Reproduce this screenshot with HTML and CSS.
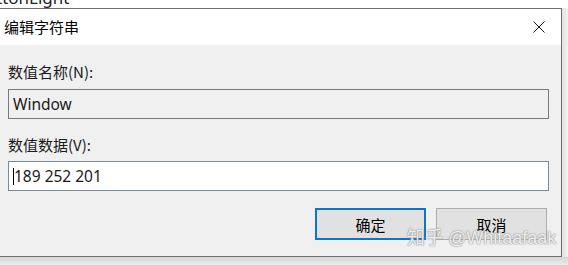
FILE: index.html
```html
<!DOCTYPE html>
<html lang="zh-CN">
<head>
    <meta charset="UTF-8">
    <meta name="viewport" content="width=device-width, initial-scale=1.0">
    <title>编辑字符串</title>
    <link rel="stylesheet" href="styles.css">
</head>
<body>

<div class="behind">
    <span class="behind-text">ttonLight</span>
</div>

<div class="stage">
    <div class="dialog">
        <div class="titlebar">
            <span class="title">编辑字符串</span>
            <button class="close" aria-label="关闭">
                <svg width="12" height="12" viewBox="0 0 12 12">
                    <path d="M0.5 0.5 L11.5 11.5 M11.5 0.5 L0.5 11.5" stroke="#111" stroke-width="1" fill="none"/>
                </svg>
            </button>
        </div>

        <div class="content">
            <label class="field-label">数值名称(N):</label>
            <div class="field readonly">Window</div>

            <label class="field-label second">数值数据(V):</label>
            <div class="field editable"><span class="caret"></span>189 252 201</div>

            <div class="actions">
                <button class="btn primary">确定</button>
                <button class="btn">取消</button>
            </div>

            <div class="watermark">知乎 @Whitaafaak</div>
        </div>
    </div>
    <div class="side-shadow"></div>
</div>

<div class="bottom-shadow"></div>

</body>
</html>
```

FILE: styles.css
```css
body {
    margin: 0;
    padding: 0;
    width: 568px;
    height: 265px;
    overflow: hidden;
    background-color: #fff;
    font-family: "Noto Sans", "Noto Sans CJK SC", sans-serif;
    font-size: 15px;
    color: #000;
}

.behind {
    height: 8px;
    overflow: hidden;
    background: #fff;
}

.behind-text {
    display: block;
    margin-top: -12px;
    margin-left: -4px;
    font-size: 17px;
    line-height: 20px;
    color: #222;
}

.stage {
    display: flex;
}

.dialog {
    position: relative;
    width: 561px;
    border-top: 1px solid #6f6f6f;
    border-right: 1px solid #6f6f6f;
    border-bottom: 1px solid #6f6f6f;
    background-color: #f0f0f0;
}

.side-shadow {
    flex: 1;
    background: linear-gradient(to right, #e2e2e2, #f2f2f2);
}

.bottom-shadow {
    height: 8px;
    background: linear-gradient(to bottom, #d6d6d6, #ececec);
}

.titlebar {
    height: 36px;
    background: #fff;
    display: flex;
    align-items: center;
    justify-content: space-between;
}

.title {
    margin-left: 4px;
    font-family: "Noto Sans CJK SC", sans-serif;
    font-size: 15px;
    line-height: 20px;
}

.close {
    width: 46px;
    height: 36px;
    border: none;
    background: transparent;
    display: flex;
    align-items: center;
    justify-content: center;
    padding: 0 0 0 2px;
}

.content {
    padding: 17px 0 16px 8px;
}

.field-label {
    display: block;
    font-family: "Noto Sans CJK SC", sans-serif;
    line-height: 20px;
    color: #1a1a1a;
}

.field-label.second {
    margin-top: 16px;
}

.field {
    box-sizing: border-box;
    width: 541px;
    height: 30px;
    margin-top: 7px;
    padding-left: 4px;
    display: flex;
    align-items: center;
    font-family: "Noto Sans", "Noto Sans CJK SC", sans-serif;
    font-size: 15.5px;
    color: #1a1a1a;
}

.field.readonly {
    border: 1px solid #7a7a7a;
    background: #f0f0f0;
}

.field.editable {
    margin-top: 6px;
    border: 1px solid #7a8a9c;
    background: #fff;
}

.caret {
    display: inline-block;
    width: 0;
    height: 17px;
    border-left: 1px solid #000;
}

.actions {
    display: flex;
    gap: 10px;
    margin-top: 17px;
    margin-left: 307px;
}

.btn {
    box-sizing: border-box;
    width: 111px;
    height: 32px;
    border: 1px solid #adadad;
    background: #e1e1e1;
    font-family: "Noto Sans CJK SC", sans-serif;
    font-size: 15px;
    color: #000;
    padding: 0;
}

.btn.primary {
    border: 2px solid #0a74d0;
}

.watermark {
    position: absolute;
    left: 407px;
    top: 219px;
    white-space: nowrap;
    font-family: "Liberation Sans", "Noto Sans CJK SC", sans-serif;
    font-size: 18px;
    line-height: 20px;
    color: rgba(255, 255, 255, 0.85);
    text-shadow: 0 0 1px #8a8a8a, 0 0 2px #9a9a9a;
}
```
